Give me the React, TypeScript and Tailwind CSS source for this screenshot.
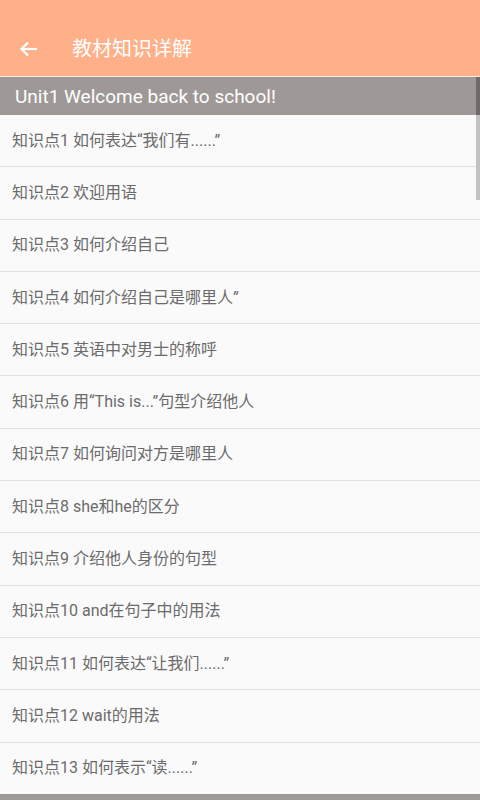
import React from "react";

const items = [
  "知识点1 如何表达“我们有......”",
  "知识点2 欢迎用语",
  "知识点3 如何介绍自己",
  "知识点4 如何介绍自己是哪里人”",
  "知识点5 英语中对男士的称呼",
  "知识点6 用“This is...”句型介绍他人",
  "知识点7 如何询问对方是哪里人",
  "知识点8 she和he的区分",
  "知识点9 介绍他人身份的句型",
  "知识点10 and在句子中的用法",
  "知识点11 如何表达“让我们......”",
  "知识点12 wait的用法",
  "知识点13 如何表示“读......”",
];

const font = { fontFamily: 'Roboto, "Noto Sans CJK SC", sans-serif' };

export default function App() {
  return (
    <div className="w-[480px] h-[800px] overflow-hidden bg-[#fafafa] flex flex-col relative" style={font}>
      <div className="h-[76px] bg-[#ffb088] flex items-center pt-[22px] shrink-0">
        <div className="w-[72px] flex items-center pl-[19px]">
          <svg width="19" height="16" viewBox="0 0 19 16" fill="none" stroke="white" strokeWidth="2.2">
            <path d="M18 8H3" />
            <path d="M9 1.5L2.5 8L9 14.5" />
          </svg>
        </div>
        <span className="text-white text-[20px] leading-none">教材知识详解</span>
      </div>
      <div className="h-[1px] bg-[#fbeee6] shrink-0" />
      <div className="h-[38px] bg-[#9e9897] flex items-center pl-[15px] shrink-0">
        <span className="text-white text-[19px] leading-none">Unit1 Welcome back to school!</span>
      </div>
      <div className="flex flex-col">
        {items.map((t) => (
          <div key={t} className="h-[52.3px] shrink-0 border-b border-[#e2e2e2] flex items-center pl-[12px] box-border">
            <span className="text-[#6b6b6b] text-[16px] leading-none">{t}</span>
          </div>
        ))}
      </div>
      <div className="absolute left-0 right-0 bottom-0 h-[6px] bg-[#9e9a99]" />
      <div className="absolute right-0 top-[77px] w-[4px] h-[38px] bg-[#6e6a6a]" />
      <div className="absolute right-0 top-[115px] w-[4px] h-[85px] bg-[#c2c2c2]" />
    </div>
  );
}
